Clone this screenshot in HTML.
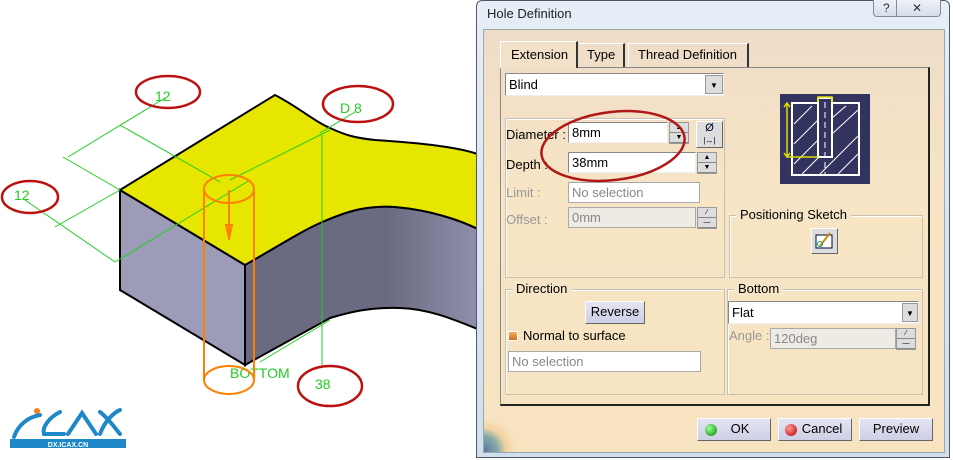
<!DOCTYPE html>
<html><head><meta charset="utf-8"><style>
*{margin:0;padding:0;box-sizing:border-box}
body{width:953px;height:460px;background:#fff;position:relative;overflow:hidden;font-family:"Liberation Sans",sans-serif;font-size:13px;color:#000}
.a{position:absolute}
.fs{position:absolute;border:1px solid #c8c0b0;box-shadow:inset 1px 1px 0 #fff}
.lg{position:absolute;background:#f6e4c6;padding:0 4px;top:-9px;left:6px;font-size:13px}
.tb{position:absolute;background:#fff;border:1px solid #888;border-right-color:#eee;border-bottom-color:#eee;font-size:13px;padding:2px 3px;height:21px}
.dis{background:#eeeae4;color:#888;border-color:#aaa}
.btn{position:absolute;background:linear-gradient(#e4e4f2,#cfcfe6);border:1px solid #fff;border-right-color:#666;border-bottom-color:#666;text-align:center;font-size:13px;line-height:20px}
.spin{position:absolute;width:20px;height:22px;background:#ddd;border:1px solid #999}
.spin i{display:block;height:10px;border-bottom:1px solid #888;font-style:normal;font-size:7px;line-height:10px;text-align:center}
.lab{position:absolute;font-size:13px}
.g{color:#999}
</style></head><body>
<svg class="a" style="left:0;top:0" width="480" height="460">
<defs><linearGradient id="rf" x1="0" x2="1"><stop offset="0.6" stop-color="#6a6a80"/><stop offset="1" stop-color="#9090ac"/></linearGradient></defs>
<polygon points="120,190 245,265 245,365 120,290" fill="#9c9cb8" stroke="#000" stroke-width="2"/>
<path d="M245,265 C280,245 300,232 320,223 C345,212 365,205 395,207 C430,210 460,220 480,230 L480,330 C455,320 430,309 400,308 C370,307 350,312 330,318 L245,365 Z" fill="url(#rf)" stroke="#000" stroke-width="2"/>
<path d="M120,190 L275,95 C300,108 315,122 330,128 C345,135 355,138 375,140 C420,143 460,147 480,155 L480,230 C460,220 430,210 395,207 C365,205 345,212 320,223 C300,232 280,245 245,265 Z" fill="#e6e600" stroke="#000" stroke-width="2"/>
<path d="M245,265 L245,365" stroke="#000" stroke-width="2"/>
<g stroke="#22cc22" stroke-width="1" fill="none">
<line x1="68" y1="157" x2="165" y2="98"/>
<line x1="120" y1="125" x2="220" y2="182"/>
<line x1="63" y1="157" x2="120" y2="190"/>
<line x1="25" y1="200" x2="115" y2="262"/>
<line x1="55" y1="227" x2="120" y2="190"/>
<line x1="115" y1="262" x2="250" y2="180"/>
<line x1="320" y1="133" x2="355" y2="112"/>
<line x1="230" y1="180" x2="330" y2="130"/>
<line x1="322" y1="135" x2="322" y2="365"/>
<line x1="260" y1="362" x2="330" y2="320"/>
</g>
<text x="155" y="101" fill="#22cc22" font-size="14">12</text>
<text x="14" y="200" fill="#22cc22" font-size="14">12</text>
<text x="340" y="113" fill="#22cc22" font-size="14">D 8</text>
<text x="315" y="389" fill="#22cc22" font-size="14">38</text>
<text x="230" y="378" fill="#22cc22" font-size="14">BOTTOM</text>
<g stroke="#ff8000" stroke-width="2" fill="none">
<ellipse cx="229" cy="189" rx="25" ry="14"/>
<ellipse cx="229" cy="380" rx="25" ry="14"/>
<line x1="204" y1="189" x2="204" y2="380"/>
<line x1="254" y1="189" x2="254" y2="380"/>
<line x1="229" y1="190" x2="229" y2="240"/>
<path d="M226,225 L229,238 L232,225 Z"/>
</g>
<g stroke="#bb1111" stroke-width="2.5" fill="none">
<ellipse cx="168" cy="92" rx="32" ry="16"/>
<ellipse cx="30" cy="197" rx="28" ry="16"/>
<ellipse cx="358" cy="104" rx="35" ry="18"/>
<ellipse cx="330" cy="386" rx="32" ry="20"/>
</g>
<g stroke="#1e88c8" stroke-width="4" fill="none" stroke-linecap="round">
<path d="M14,437 C18,425 28,417 40,415"/>
<path d="M60,412 C48,418 42,428 44,434 L64,434"/>
<path d="M68,434 L82,413 L96,434"/>
<path d="M100,434 C105,420 115,412 120,410 M100,412 C108,418 115,428 120,434"/>
</g>
<circle cx="37" cy="411" r="3" fill="#f08020"/>
<rect x="10" y="439" width="116" height="9" fill="#1e88c8"/>
<text x="68" y="447" fill="#fff" font-size="7" font-weight="bold" text-anchor="middle">DX.ICAX.CN</text>
</svg>

<div class="a" style="left:476px;top:0;width:474px;height:458px;background:linear-gradient(#e6eef7,#cfdff0);border:1px solid #556;border-radius:6px 6px 0 0"></div>
<div class="a" style="left:487px;top:6px;font-size:13px;color:#222">Hole Definition</div>
<div class="a" style="left:873px;top:0;width:68px;height:17px;border:1px solid #889;border-top:none;border-radius:0 0 4px 4px;background:linear-gradient(#eef2f8,#d4deea);font-size:12px;line-height:16px;color:#333"><span style="position:absolute;left:9px">?</span><span style="position:absolute;left:22px;top:0;width:1px;height:16px;background:#889"></span><span style="position:absolute;left:38px">✕</span></div>
<div class="a" style="left:483px;top:29px;width:462px;height:424px;background:linear-gradient(#efdcc8,#f7e5c5 40%,#f7e3c0);border:1px solid #9aa"></div>
<div class="a" style="left:500px;top:67px;width:430px;height:339px;border:1px solid #888;border-right:2px solid #222;border-bottom:2px solid #222"></div>
<div class="a" style="left:500px;top:41px;width:78px;height:27px;border:1px solid #fff;border-right:2px solid #333;border-bottom:none;background:#f3e0c8;padding:5px 0 0 10px">Extension</div>
<div class="a" style="left:579px;top:43px;width:46px;height:24px;border-top:1px solid #fff;border-right:2px solid #333;padding:3px 0 0 8px">Type</div>
<div class="a" style="left:628px;top:43px;width:121px;height:24px;border-top:1px solid #fff;border-left:1px solid #fff;border-right:2px solid #333;padding:3px 0 0 9px">Thread Definition</div>
<div class="tb" style="left:505px;top:73px;width:219px;height:23px;padding-top:3px">Blind</div>
<div class="a" style="left:705px;top:75px;width:18px;height:19px;background:#ddd;border:1px solid #999;font-size:8px;text-align:center;line-height:19px">▼</div>
<div class="fs" style="left:505px;top:118px;width:220px;height:160px"></div>
<div class="lab" style="left:506px;top:127px">Diameter :</div>
<div class="tb" style="left:568px;top:122px;width:100px">8mm</div>
<div class="spin" style="left:669px;top:122px"><i>▲</i><i>▼</i></div>
<div class="a" style="left:696px;top:121px;width:27px;height:27px;background:#ddd;border:1px solid #fff;border-right-color:#666;border-bottom-color:#666;font-size:11px;text-align:center;color:#003">Ø<br><span style="font-size:8px">|↔|</span></div>
<div class="lab" style="left:506px;top:157px">Depth :</div>
<div class="tb" style="left:568px;top:152px;width:128px">38mm</div>
<div class="spin" style="left:697px;top:152px"><i>▲</i><i>▼</i></div>
<div class="lab g" style="left:506px;top:185px">Limit :</div>
<div class="tb dis" style="left:568px;top:182px;width:132px;background:#fff">No selection</div>
<div class="lab g" style="left:506px;top:212px">Offset :</div>
<div class="tb dis" style="left:568px;top:207px;width:128px">0mm</div>
<div class="spin" style="left:697px;top:207px"><i>⁄</i><i>—</i></div>
<svg class="a" style="left:536px;top:106px" width="156" height="80"><ellipse cx="77" cy="40" rx="72" ry="34" transform="rotate(-7 77 40)" fill="none" stroke="#b01818" stroke-width="2.5"/></svg>
<svg class="a" style="left:780px;top:94px" width="90" height="90">
<rect width="90" height="90" fill="#33335f"/>
<rect x="12" y="9" width="67" height="72" fill="none" stroke="#fff" stroke-width="2"/>
<g stroke="#fff" stroke-width="1">
<line x1="14" y1="30" x2="32" y2="12"/><line x1="14" y1="50" x2="38" y2="26"/><line x1="14" y1="70" x2="38" y2="46"/><line x1="22" y1="80" x2="48" y2="54"/>
<line x1="40" y1="80" x2="78" y2="42"/><line x1="58" y1="80" x2="78" y2="60"/><line x1="52" y1="40" x2="78" y2="16"/><line x1="52" y1="24" x2="66" y2="12"/>
</g>
<rect x="38" y="4" width="14" height="59" fill="#33335f" stroke="#fff" stroke-width="2"/>
<line x1="45" y1="8" x2="45" y2="80" stroke="#fff" stroke-dasharray="6,4"/>
<g stroke="#dddd00" stroke-width="1.5" fill="none"><path d="M7,9 L7,63 L38,63 M4,13 L7,9 L10,13 M4,59 L7,63 L10,59 M38,8 L38,3 L52,3 L52,8"/></g>
</svg>
<div class="fs" style="left:729px;top:215px;width:194px;height:63px"><div class="lg">Positioning Sketch</div></div>
<div class="a" style="left:811px;top:228px;width:27px;height:26px;background:#ddd;border:1px solid #fff;border-right-color:#666;border-bottom-color:#666"><svg width="25" height="24"><rect x="4" y="6" width="16" height="13" fill="#fff" stroke="#003"/><path d="M8,17 L18,4" stroke="#c80" stroke-width="2"/><circle cx="8" cy="15" r="2.5" fill="none" stroke="#0a8"/></svg></div>
<div class="fs" style="left:505px;top:289px;width:220px;height:106px"><div class="lg">Direction</div></div>
<div class="btn" style="left:585px;top:301px;width:60px;height:23px">Reverse</div>
<div class="a" style="left:508px;top:331px;width:10px;height:10px;background:linear-gradient(#f8b060,#d07020);border:1px solid #fff"></div>
<div class="lab" style="left:523px;top:328px">Normal to surface</div>
<div class="tb" style="left:508px;top:351px;width:193px;color:#888;border-color:#aaa">No selection</div>
<div class="fs" style="left:727px;top:289px;width:196px;height:106px"><div class="lg">Bottom</div></div>
<div class="tb" style="left:728px;top:301px;width:191px;height:23px;padding-top:3px">Flat</div>
<div class="a" style="left:902px;top:303px;width:16px;height:19px;background:#ddd;border:1px solid #999;font-size:8px;text-align:center;line-height:19px">▼</div>
<div class="lab g" style="left:729px;top:328px">Angle :</div>
<div class="tb dis" style="left:770px;top:328px;width:126px">120deg</div>
<div class="spin" style="left:896px;top:328px"><i>⁄</i><i>—</i></div>
<div class="a" style="left:484px;top:420px;width:40px;height:32px;background:radial-gradient(circle at 0 30px,#5a7aa0 0,#8aa 14px,rgba(240,200,140,0.6) 22px,transparent 32px)"></div>
<div class="btn" style="left:697px;top:418px;width:74px;height:23px"><span style="position:absolute;left:7px;top:5px;width:12px;height:12px;border-radius:50%;background:radial-gradient(circle at 35% 35%,#9f9,#080)"></span><span style="margin-left:12px">OK</span></div>
<div class="btn" style="left:778px;top:418px;width:74px;height:23px"><span style="position:absolute;left:6px;top:5px;width:12px;height:12px;border-radius:50%;background:radial-gradient(circle at 35% 35%,#f99,#b00)"></span><span style="margin-left:14px">Cancel</span></div>
<div class="btn" style="left:859px;top:418px;width:74px;height:23px">Preview</div>
</body></html>
